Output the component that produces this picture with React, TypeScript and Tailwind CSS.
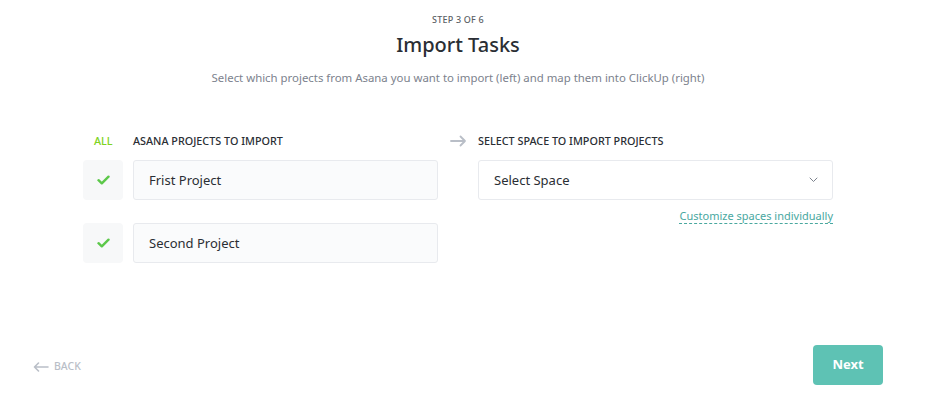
import React from "react";

const font = { fontFamily: '"Noto Sans", "Open Sans", sans-serif' };

const CheckIcon = () => (
  <svg width="13" height="10" viewBox="0 0 13 10" fill="none">
    <path d="M1.5 5.2 L4.8 8.3 L11.5 1.7" stroke="#5cc84a" strokeWidth="2.4" strokeLinecap="round" strokeLinejoin="round" />
  </svg>
);

const ProjectRow = ({ name }: { name: string }) => (
  <div className="flex gap-[10px]">
    <div className="flex h-10 w-10 items-center justify-center rounded-[4px] bg-[#f7f8f9]">
      <CheckIcon />
    </div>
    <div className="flex h-10 w-[305px] items-center rounded-[3px] border border-[#e8eaee] bg-[#fafbfc] pl-[15px] pt-[2px] text-[13px] text-[#2a2e34]">
      {name}
    </div>
  </div>
);

export default function App() {
  return (
    <div className="flex h-[419px] w-[916px] flex-col bg-white" style={font}>
      <div className="flex flex-col items-center pt-[13px]">
        <div className="text-[9px] font-medium tracking-[0.2px] text-[#5b5f66]">STEP 3 OF 6</div>
        <h1 className="mt-[5px] text-[20px] font-medium leading-[26px] text-[#2a2e34]">Import Tasks</h1>
        <p className="mt-[11px] text-[11.4px] text-[#7c828d]">
          Select which projects from Asana you want to import (left) and map them into ClickUp (right)
        </p>
      </div>

      <div className="mt-[46px] flex pl-[83px]">
        <div className="flex w-[355px] flex-col">
          <div className="flex h-[18px] items-center text-[10.8px] font-medium">
            <span className="w-[50px] pl-[11px] text-[#7ed321]">ALL</span>
            <span className="text-[#2a2e34]">ASANA PROJECTS TO IMPORT</span>
          </div>
          <div className="mt-[10px] flex flex-col gap-[23px]">
            <ProjectRow name="Frist Project" />
            <ProjectRow name="Second Project" />
          </div>
        </div>

        <div className="flex w-[40px] justify-center pt-[3px]">
          <svg width="17" height="12" viewBox="0 0 17 12" fill="none">
            <path d="M1 6 H15 M10.5 1.5 L15 6 L10.5 10.5" stroke="#b9bec7" strokeWidth="1.8" strokeLinecap="round" strokeLinejoin="round" />
          </svg>
        </div>

        <div className="flex w-[355px] flex-col">
          <div className="flex h-[18px] items-center text-[10.8px] font-medium text-[#2a2e34]">
            SELECT SPACE TO IMPORT PROJECTS
          </div>
          <div className="mt-[10px] flex h-10 items-center justify-between rounded-[3px] border border-[#e8eaee] bg-white pl-[15px] pr-[14px] text-[13px] text-[#2a2e34]">
            <span className="pt-[2px]">Select Space</span>
            <svg width="9" height="6" viewBox="0 0 9 6" fill="none">
              <path d="M1 1 L4.5 4.5 L8 1" stroke="#7c828d" strokeWidth="1" strokeLinecap="round" />
            </svg>
          </div>
          <div className="mt-[8px] flex justify-end">
            <span className="border-b border-dashed border-[#49a89f] text-[11px] leading-[15px] text-[#49a89f]">
              Customize spaces individually
            </span>
          </div>
        </div>
      </div>

      <div className="mt-auto mb-[34px] flex items-center justify-between px-[33px]">
        <div className="flex items-center gap-[5px] pt-[4px] text-[10.5px] font-medium text-[#b9bec7]">
          <svg width="16" height="10" viewBox="0 0 16 10" fill="none">
            <path d="M15 5 H1.5 M5.5 1 L1.5 5 L5.5 9" stroke="#b9bec7" strokeWidth="1.6" strokeLinecap="round" strokeLinejoin="round" />
          </svg>
          BACK
        </div>
        <button className="h-10 w-[70px] rounded-[4px] bg-[#5ec2b4] text-[13px] font-bold text-white">Next</button>
      </div>
    </div>
  );
}
